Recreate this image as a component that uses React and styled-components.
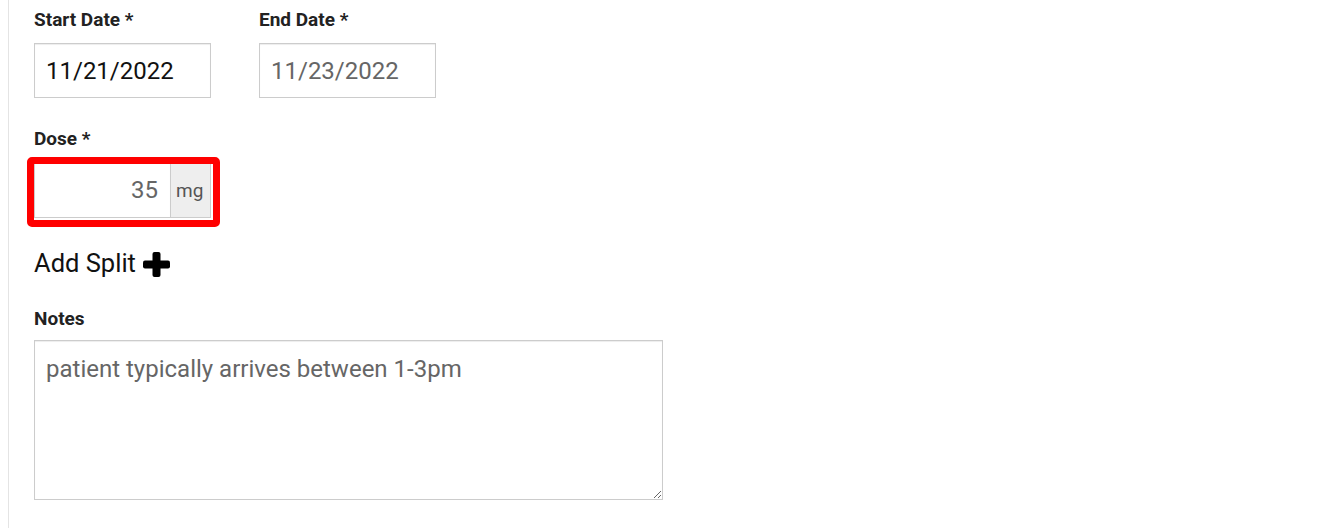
import React from "react"
import styled, { createGlobalStyle } from "styled-components"

const GlobalStyle = createGlobalStyle`
    html, body {
        margin: 0;
        padding: 0;
        background: #fff;
    }
    body {
        font-family: Roboto, "Liberation Sans", sans-serif;
    }
`

const Page = styled.div`
    margin-left: 8px;
    border-left: 1px solid #e4e4e4;
    min-height: 528px;
    box-sizing: border-box;
    padding: 9px 0 0 25px;
`

const Field = styled.div`
    display: flex;
    flex-direction: column;
    align-items: flex-start;
    margin-bottom: ${p => p.$gap ?? 30}px;
`

const Label = styled.label`
    font: 700 19px/22px Roboto, "Liberation Sans", sans-serif;
    color: #222;
    margin-bottom: ${p => p.$mb ?? 12}px;
`

const DateRow = styled.div`
    display: flex;
    gap: 48px;
`

const TextInput = styled.input`
    box-sizing: border-box;
    width: 177px;
    height: 55px;
    border: 1px solid #ccc;
    border-radius: 0;
    box-shadow: inset 0 1px 1px rgba(0, 0, 0, 0.075);
    padding: 0 11px;
    font: 400 24px Roboto, "Liberation Sans", sans-serif;
    color: ${p => p.$muted ? "#666" : "#111"};
    text-align: ${p => p.$right ? "right" : "left"};
    background: #fff;
    outline: none;
`

const Highlight = styled.div`
    position: relative;
    display: inline-flex;

    &::after {
        content: "";
        position: absolute;
        left: -7px;
        top: -5px;
        right: -9px;
        bottom: -9px;
        border: 7px solid #ff0000;
        border-radius: 5px;
        pointer-events: none;
    }
`

const InputGroup = styled.div`
    display: flex;
    height: 56px;

    ${TextInput} {
        width: 136px;
        height: 56px;
        padding-right: 12px;
        border-right: none;
    }
`

const Addon = styled.span`
    display: flex;
    align-items: center;
    padding: 0 7px 0 5px;
    border: 1px solid #ccc;
    background: #eee;
    color: #555;
    font: 400 19px Roboto, "Liberation Sans", sans-serif;
`

const AddSplit = styled.button`
    display: flex;
    align-items: center;
    gap: 7px;
    margin: 30px 0 30px;
    padding: 0;
    height: 30px;
    border: none;
    background: none;
    cursor: pointer;
    font: 400 25.5px Roboto, "Liberation Sans", sans-serif;
    color: #111;

    svg {
        margin-top: 2px;
    }
`

const Notes = styled.textarea`
    box-sizing: border-box;
    width: 629px;
    height: 160px;
    border: 1px solid #ccc;
    box-shadow: inset 0 1px 1px rgba(0, 0, 0, 0.075);
    padding: 14px 11px;
    font: 400 24px Roboto, "Liberation Sans", sans-serif;
    color: #666;
    outline: none;
`

const PlusIcon = () => (
    <svg width="27" height="25" viewBox="0 0 27 25" fill="#000">
        <rect x="9.5" y="0" width="8" height="25" rx="2" />
        <rect x="0" y="8.5" width="27" height="8" rx="2" />
    </svg>
)

const App = () => {
    return (
        <Page>
            <GlobalStyle />
            <DateRow>
                <Field>
                    <Label>Start Date *</Label>
                    <TextInput defaultValue="11/21/2022" />
                </Field>
                <Field>
                    <Label>End Date *</Label>
                    <TextInput defaultValue="11/23/2022" $muted />
                </Field>
            </DateRow>
            <Field $gap={0}>
                <Label>Dose *</Label>
                <Highlight>
                    <InputGroup>
                        <TextInput defaultValue="35" $muted $right />
                        <Addon>mg</Addon>
                    </InputGroup>
                </Highlight>
            </Field>
            <AddSplit>
                Add Split <PlusIcon />
            </AddSplit>
            <Field>
                <Label $mb={10}>Notes</Label>
                <Notes defaultValue="patient typically arrives between 1-3pm" />
            </Field>
        </Page>
    )
}

export default App
